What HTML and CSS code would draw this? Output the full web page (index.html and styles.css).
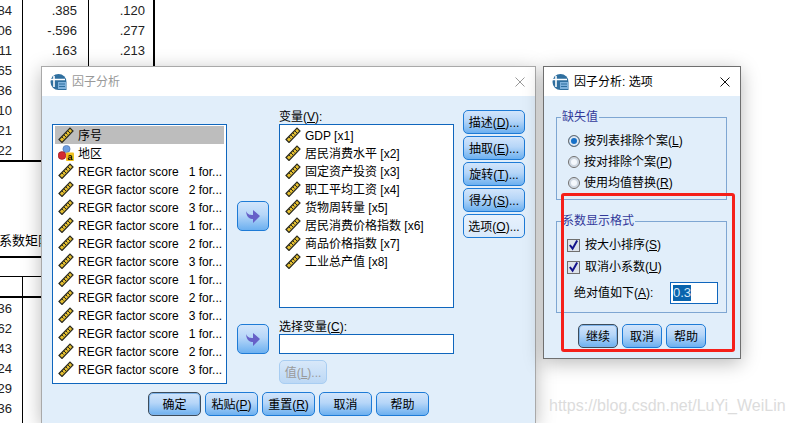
FILE: index.html
```html
<!DOCTYPE html>
<html lang="zh">
<head>
<meta charset="utf-8">
<title>因子分析</title>
<link rel="stylesheet" href="styles.css">
</head>
<body>
<svg class="defs" width="0" height="0" aria-hidden="true">
  <symbol id="ruler" viewBox="0 0 16 16">
    <polygon points="1,12.5 12,1 15,4 4,15.5" fill="#e6c030" stroke="#2a2a20" stroke-width="1.2"/>
    <path d="M4 10l1.5 1.5M6 8l2 2M8 6l1.5 1.5M10 4l2 2" stroke="#2a2a20" stroke-width="1" fill="none"/>
  </symbol>
  <symbol id="nominal" viewBox="0 0 16 16">
    <circle cx="8.5" cy="4" r="3.6" fill="#6d9ee0" stroke="#3c66a8" stroke-width=".6"/>
    <circle cx="4" cy="10.5" r="3.9" fill="#d42a32" stroke="#8e1820" stroke-width=".6"/>
    <rect x="8" y="7.5" width="8" height="8.5" fill="#f0c020" rx="1"/>
    <text x="12" y="14.6" class="icon-a">a</text>
  </symbol>
  <symbol id="appicon" viewBox="0 0 17 16">
    <path d="M8.5 0a8 8 0 1 0 0 16h8V8a8 8 0 0 0-8-8z" fill="#2f6f9f"/>
    <path d="M0 5.5h7M4 2v11M7 5.5h8" stroke="#fff" stroke-width="1.6" fill="none"/>
    <rect x="8" y="8" width="8" height="7" fill="#7fb2dc"/>
    <path d="M9 10h6M9 12.5h6" stroke="#2f6f9f" stroke-width="1"/>
  </symbol>
  <symbol id="arrow" viewBox="0 0 14 14">
    <path d="M0 2C1.500 5.500 3.500 6 7 6V1l7 6-7 7v-4C4 10 .5 8.500 0 2z" fill="#6660c8"/>
  </symbol>
  <symbol id="close" viewBox="0 0 10 10">
    <path d="M.5.500l9 9M9.500.500l-9 9" stroke="currentColor" stroke-width="1" fill="none"/>
  </symbol>
  <symbol id="tick" viewBox="0 0 12 12">
    <path d="M2 6l3 4 5-9" stroke="#14148c" stroke-width="2.200" fill="none"/>
  </symbol>
</svg>

<div class="backdrop">
  <div class="table-one">
    <div class="cell">84</div><div class="cell">.385</div><div class="cell last">.120</div>
    <div class="cell">06</div><div class="cell">-.596</div><div class="cell last">.277</div>
    <div class="cell">11</div><div class="cell">.163</div><div class="cell last">.213</div>
    <div class="cell">65</div><div class="cell"></div><div class="cell last"></div>
    <div class="cell">36</div><div class="cell"></div><div class="cell last"></div>
    <div class="cell">10</div><div class="cell"></div><div class="cell last"></div>
    <div class="cell">21</div><div class="cell"></div><div class="cell last"></div>
    <div class="cell">22</div><div class="cell"></div><div class="cell last"></div>
  </div>
  <div class="table-title">系数矩阵</div>
  <div class="table-two">
    <div class="spacer-row"></div>
    <div class="head-row"><div class="head-cell"></div></div>
    <div class="row-two"><div class="cell">36</div></div>
    <div class="row-two"><div class="cell">62</div></div>
    <div class="row-two"><div class="cell">43</div></div>
    <div class="row-two"><div class="cell">24</div></div>
    <div class="row-two"><div class="cell">29</div></div>
    <div class="row-two"><div class="cell">36</div></div>
    <div class="row-two"><div class="cell">25</div></div>
  </div>
</div>

<section class="window window-main">
  <header class="titlebar">
    <svg class="app-icon"><use href="#appicon"/></svg>
    <span class="title-text inactive">因子分析</span>
    <svg class="close inactive"><use href="#close"/></svg>
  </header>
  <div class="main-body">
    <div class="main-grid">
      <div class="source-col">
        <ul class="list list-source">
          <li class="item selected"><svg class="var-icon"><use href="#ruler"/></svg><span>序号</span></li>
          <li class="item"><svg class="var-icon"><use href="#nominal"/></svg><span>地区</span></li>
          <li class="item"><svg class="var-icon"><use href="#ruler"/></svg><span>REGR factor score   1 for...</span></li>
          <li class="item"><svg class="var-icon"><use href="#ruler"/></svg><span>REGR factor score   2 for...</span></li>
          <li class="item"><svg class="var-icon"><use href="#ruler"/></svg><span>REGR factor score   3 for...</span></li>
          <li class="item"><svg class="var-icon"><use href="#ruler"/></svg><span>REGR factor score   1 for...</span></li>
          <li class="item"><svg class="var-icon"><use href="#ruler"/></svg><span>REGR factor score   2 for...</span></li>
          <li class="item"><svg class="var-icon"><use href="#ruler"/></svg><span>REGR factor score   3 for...</span></li>
          <li class="item"><svg class="var-icon"><use href="#ruler"/></svg><span>REGR factor score   1 for...</span></li>
          <li class="item"><svg class="var-icon"><use href="#ruler"/></svg><span>REGR factor score   2 for...</span></li>
          <li class="item"><svg class="var-icon"><use href="#ruler"/></svg><span>REGR factor score   3 for...</span></li>
          <li class="item"><svg class="var-icon"><use href="#ruler"/></svg><span>REGR factor score   1 for...</span></li>
          <li class="item"><svg class="var-icon"><use href="#ruler"/></svg><span>REGR factor score   2 for...</span></li>
          <li class="item"><svg class="var-icon"><use href="#ruler"/></svg><span>REGR factor score   3 for...</span></li>
        </ul>
      </div>
      <div class="arrow-col">
        <button class="btn btn-arrow"><svg class="arrow-icon"><use href="#arrow"/></svg></button>
        <button class="btn btn-arrow"><svg class="arrow-icon"><use href="#arrow"/></svg></button>
      </div>
      <div class="target-col">
        <label class="field-label">变量(<u>V</u>):</label>
        <ul class="list list-target">
          <li class="item"><svg class="var-icon"><use href="#ruler"/></svg><span>GDP [x1]</span></li>
          <li class="item"><svg class="var-icon"><use href="#ruler"/></svg><span>居民消费水平 [x2]</span></li>
          <li class="item"><svg class="var-icon"><use href="#ruler"/></svg><span>固定资产投资 [x3]</span></li>
          <li class="item"><svg class="var-icon"><use href="#ruler"/></svg><span>职工平均工资 [x4]</span></li>
          <li class="item"><svg class="var-icon"><use href="#ruler"/></svg><span>货物周转量 [x5]</span></li>
          <li class="item"><svg class="var-icon"><use href="#ruler"/></svg><span>居民消费价格指数 [x6]</span></li>
          <li class="item"><svg class="var-icon"><use href="#ruler"/></svg><span>商品价格指数 [x7]</span></li>
          <li class="item"><svg class="var-icon"><use href="#ruler"/></svg><span>工业总产值 [x8]</span></li>
        </ul>
        <label class="field-label label-select">选择变量(<u>C</u>):</label>
        <div class="select-box"></div>
        <button class="btn btn-text btn-value" disabled>值(<u>L</u>)...</button>
      </div>
      <div class="side-col">
        <button class="btn btn-text btn-side">描述(<u>D</u>)...</button>
        <button class="btn btn-text btn-side">抽取(<u>E</u>)...</button>
        <button class="btn btn-text btn-side">旋转(<u>T</u>)...</button>
        <button class="btn btn-text btn-side">得分(<u>S</u>)...</button>
        <button class="btn btn-text btn-side btn-plain">选项(<u>O</u>)...</button>
      </div>
    </div>
    <div class="main-footer">
      <button class="btn btn-text btn-foot btn-default">确定</button>
      <button class="btn btn-text btn-foot">粘贴(<u>P</u>)</button>
      <button class="btn btn-text btn-foot">重置(<u>R</u>)</button>
      <button class="btn btn-text btn-foot">取消</button>
      <button class="btn btn-text btn-foot">帮助</button>
    </div>
  </div>
</section>

<section class="window window-options">
  <header class="titlebar">
    <svg class="app-icon"><use href="#appicon"/></svg>
    <span class="title-text">因子分析: 选项</span>
    <svg class="close"><use href="#close"/></svg>
  </header>
  <div class="options-body">
    <fieldset class="group group-missing">
      <legend>缺失值</legend>
      <div class="opt-row"><span class="radio on"></span><span>按列表排除个案(<u>L</u>)</span></div>
      <div class="opt-row"><span class="radio"></span><span>按对排除个案(<u>P</u>)</span></div>
      <div class="opt-row"><span class="radio"></span><span>使用均值替换(<u>R</u>)</span></div>
    </fieldset>
    <fieldset class="group group-format">
      <legend>系数显示格式</legend>
      <div class="opt-row check-row"><span class="check"><svg class="tick"><use href="#tick"/></svg></span><span>按大小排序(<u>S</u>)</span></div>
      <div class="opt-row check-row"><span class="check"><svg class="tick"><use href="#tick"/></svg></span><span>取消小系数(<u>U</u>)</span></div>
      <div class="abs-row"><span>绝对值如下(<u>A</u>):</span><span class="abs-input"><span class="abs-sel">0.3</span></span></div>
    </fieldset>
    <div class="options-footer">
      <button class="btn btn-text btn-opt btn-default">继续</button>
      <button class="btn btn-text btn-opt">取消</button>
      <button class="btn btn-text btn-opt">帮助</button>
    </div>
  </div>
</section>

<div class="red-box"></div>
<div class="watermark">https://blog.csdn.net/LuYi_WeiLin</div>
</body>
</html>
```

FILE: styles.css
```css
* { box-sizing: border-box; }
html, body { margin: 0; padding: 0; }
body {
  position: relative;
  width: 794px;
  height: 423px;
  overflow: hidden;
  background: #fff;
  color: #000;
  font: 12px/16px "Liberation Sans", "Noto Sans CJK SC", sans-serif;
}
.defs { position: absolute; }
.icon-a { font: bold 9px "Liberation Sans", sans-serif; fill: #000; text-anchor: middle; }

/* backdrop tables */
.backdrop { width: 155px; }
.table-one {
  display: grid;
  grid-template-columns: 23px 66px 66px;
  grid-auto-rows: 20px;
  width: 155px;
  height: 162px;
  border-bottom: 2px solid #000;
  border-right: 2px solid #000;
}
.cell {
  display: flex;
  justify-content: flex-end;
  align-items: center;
  height: 20px;
  padding: 1px 10px 0 0;
  font-size: 13px;
  color: #222;
  border-right: 1px solid #000;
  white-space: nowrap;
  overflow: hidden;
}
.table-one .cell:nth-child(3n+2) { padding-right: 11px; }
.cell.last { border-right: 0; }
.table-title {
  margin: 70px 0 0 -1px;
  height: 24px;
  line-height: 16px;
  font-size: 13px;
  white-space: nowrap;
  font-family: "Noto Sans CJK SC", serif;
}
.table-two { border-top: 2px solid #000; }
.spacer-row { height: 18px; }
.head-row { height: 22px; border-top: 1px solid #000; border-bottom: 2px solid #000; }
.head-cell { width: 23px; height: 19px; border-right: 1px solid #000; }
.row-two { width: 23px; }

/* windows */
.window {
  position: absolute;
  top: 66px;
  background: #fff;
  box-shadow: 0 4px 18px rgba(0, 0, 0, .28);
}
.window-main {
  left: 41px;
  width: 495px;
  height: 357px;
  border: 1px solid #a9a9a9;
  border-bottom: 0;
}
.window-options {
  left: 543px;
  width: 198px;
  height: 293px;
  border: 1px solid #6f6f6f;
}
.titlebar {
  display: flex;
  align-items: center;
  height: 29px;
  padding: 0 10px 0 8px;
  background: #fff;
}
.app-icon { width: 17px; height: 16px; flex: none; margin-right: 5px; }
.title-text { flex: 1; line-height: 16px; white-space: nowrap; }
.title-text.inactive { color: #999; }
.close { width: 10px; height: 10px; color: #111; flex: none; }
.close.inactive { color: #999; }

.main-body, .options-body { background: #e1eefa; }
.main-body { height: 327px; padding: 0 10px; }
.main-grid {
  display: flex;
  align-items: flex-start;
}
.source-col { width: 175px; margin-top: 28px; }
.arrow-col {
  width: 32px;
  margin: 105px 0 0 10px;
  display: flex;
  flex-direction: column;
  gap: 93px;
}
.target-col {
  width: 175px;
  margin: 12px 0 0 10px;
  display: flex;
  flex-direction: column;
  align-items: flex-start;
}
.side-col {
  width: 62px;
  margin: 14px 0 0 9px;
  display: flex;
  flex-direction: column;
  gap: 2px;
}
.field-label { height: 16px; line-height: 16px; padding-top: 1px; }
.label-select { margin-top: 10px; }

.list {
  list-style: none;
  margin: 0;
  padding: 1px 2px;
  background: #fff;
  border: 1px solid #0f66bd;
  width: 175px;
}
.list-source { height: 260px; }
.list-target { height: 184px; }
.item {
  display: flex;
  align-items: center;
  height: 18px;
  padding-left: 3px;
  white-space: pre;
  overflow: hidden;
}
.item span { padding-top: 2px; line-height: 16px; }
.item.selected { background: #bdbdbd; }
.var-icon { width: 16px; height: 16px; flex: none; margin-right: 4px; }

.select-box {
  width: 175px;
  height: 20px;
  background: #fff;
  border: 1px solid #0f66bd;
}

/* buttons */
.btn {
  display: flex;
  align-items: center;
  justify-content: center;
  padding: 0;
  margin: 0;
  height: 24px;
  font: inherit;
  color: #000;
  white-space: nowrap;
  border: 1px solid #1e7bd6;
  border-radius: 5px;
  background: linear-gradient(#d2e5fb, #b6d6f8 45%, #6cb0f0);
}
.btn-text { padding-top: 2px; }
.btn-side { width: 62px; }
.btn-plain { background: linear-gradient(#e8f2fd, #d8e9fb); }
.btn-arrow { width: 32px; height: 30px; }
.arrow-icon { width: 14px; height: 14px; }
.btn-value {
  width: 48px;
  margin-top: 6px;
  color: #9a9a9a;
  border-color: #a8cdf2;
  background: linear-gradient(#d8e8f9, #bcd8f5);
}
.btn-foot { width: 53px; }
.btn-default { border-color: #3c4c5c; box-shadow: inset 0 0 0 1px #7fb4ea; }
.main-footer {
  display: flex;
  gap: 4px;
  margin-top: 8px;
  padding-left: 96px;
}

/* options dialog */
.options-body { height: 262px; padding: 14px 12px 0; }
.group {
  margin: 0;
  padding: 0;
  width: 171px;
  border: 1px solid #7ea6d2;
  min-width: 0;
}
.group legend {
  margin: 4px 0 0 4px;
  padding: 0 1px;
  color: #33399a;
  font-size: 12px;
  line-height: 14px;
}
.group-missing { height: 90px; padding-top: 6px; }
.group-format { height: 99px; margin-top: 14px; padding-top: 6px; }
.opt-row {
  display: flex;
  align-items: center;
  height: 21px;
  padding-left: 11px;
  white-space: nowrap;
}
.check-row { height: 22px; padding-left: 10px; }
.radio {
  width: 12px;
  height: 12px;
  margin-right: 4px;
  flex: none;
  border-radius: 50%;
  border: 1px solid #6f6f6f;
  background: #f4f8fc;
  box-shadow: inset 0 0 0 2px #cfd8e2;
}
.radio.on { background: #1670c8; box-shadow: inset 0 0 0 2px #dfe8f2; }
.check {
  display: flex;
  align-items: center;
  justify-content: center;
  width: 13px;
  height: 13px;
  margin-right: 5px;
  flex: none;
  border: 1px solid #6f6f6f;
  background: #dde3ea;
}
.tick { width: 12px; height: 12px; }
.abs-row {
  display: flex;
  align-items: center;
  justify-content: space-between;
  height: 22px;
  margin-top: 4px;
  padding: 0 8px 0 17px;
}
.abs-input {
  display: flex;
  align-items: center;
  width: 48px;
  height: 22px;
  padding-left: 2px;
  background: #fff;
  border: 1px solid #0f66bd;
}
.abs-sel {
  background: #0a64ad;
  color: #d8e8f8;
  font-size: 13px;
  line-height: 16px;
  width: 18px;
}
.options-footer {
  display: flex;
  gap: 4px;
  margin-top: 11px;
  padding-left: 22px;
}
.btn-opt { width: 40px; }

/* overlays */
.red-box {
  position: absolute;
  left: 561px;
  top: 193px;
  width: 174px;
  height: 159px;
  border: 3px solid #f5201a;
  border-radius: 3px;
}
.watermark {
  position: absolute;
  left: 549px;
  top: 396px;
  font-size: 16px;
  line-height: 20px;
  color: #dcdcdc;
  white-space: nowrap;
}
```
